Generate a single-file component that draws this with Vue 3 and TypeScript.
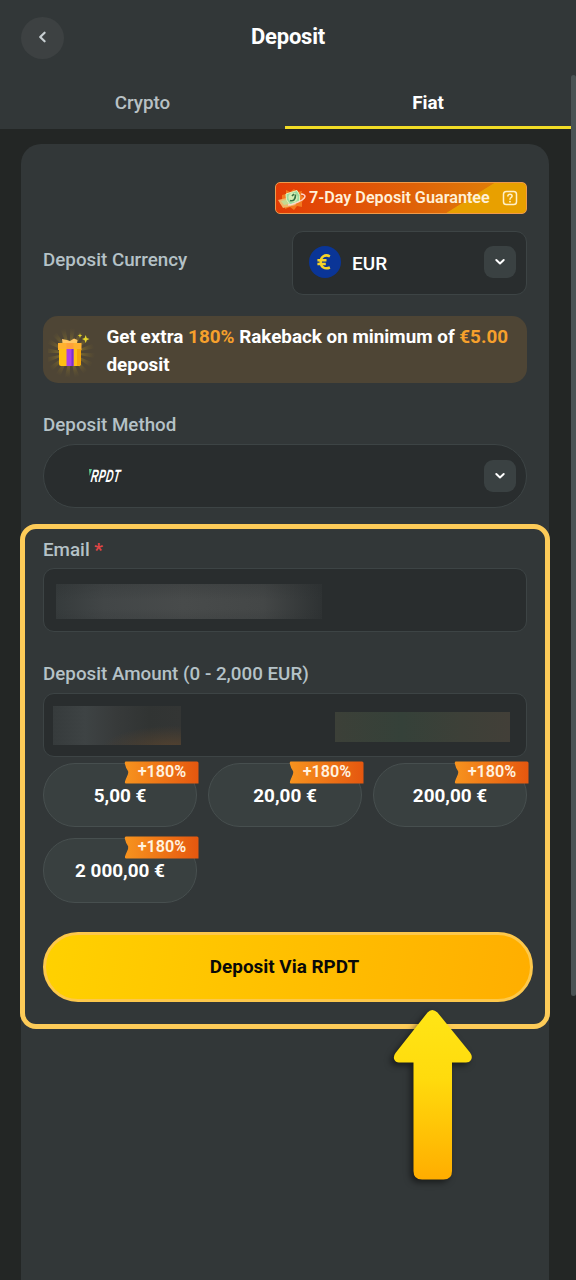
<script setup lang="ts">
import { ref } from 'vue'

interface Preset {
  label: string
  bonus: string
}

const tabs = ['Crypto', 'Fiat']
const activeTab = ref('Fiat')
const presets: Preset[] = [
  { label: '5,00 €', bonus: '+180%' },
  { label: '20,00 €', bonus: '+180%' },
  { label: '200,00 €', bonus: '+180%' },
  { label: '2 000,00 €', bonus: '+180%' },
]
const rays = Array.from({ length: 16 }, (_, i) => i * 22.5 + 6)
</script>

<template>
  <div class="page">
    <header class="header">
      <div class="titlebar">
        <button class="back" aria-label="Back">
          <svg width="43" height="42" viewBox="0 0 43 42">
            <path d="M23.600 15.700 L19.200 20 L23.600 24.300" fill="none" stroke="#c8cfd2" stroke-width="2.2" stroke-linecap="round" stroke-linejoin="round" />
          </svg>
        </button>
        <h1 class="title">Deposit</h1>
      </div>
      <nav class="tabs">
        <button v-for="t in tabs" :key="t" class="tab" :class="{ active: t === activeTab }" @click="activeTab = t">{{ t }}</button>
      </nav>
    </header>

    <main class="card">
      <div class="guarantee">
        <svg class="coin" width="30" height="28" viewBox="0 0 30 28">
          <path d="M5 10 L9 9 L9 5 L13 7 L17 4 L20 7 L25 6 L24 10 L28 13 L25 17 L25 22 L20 21 L17 25 L13 22 L8 24 L8 20 L3 19 L5 15Z" fill="#f37a20" />
          <path d="M1 15 L14 12 L19 20 L6 23Z" fill="#efb66b" />
          <path d="M4 16 L13 14 L16 18 L7 20Z" fill="#c5d991" />
          <path d="M9 9 L20 5.500 Q24 10 22.500 16 L13 20 Q8 15 9 9Z" fill="#98dda0" stroke="#e8f0b8" stroke-width="1" stroke-linejoin="round" />
          <ellipse cx="16" cy="12.5" rx="4.6" ry="4.8" fill="#d6edb3" />
          <path d="M13 15.500 Q18.500 17 18.500 9.500 M15 11 L17 9" fill="none" stroke="#367343" stroke-width="1.7" />
          <path d="M24 9 Q31.500 10 25 15 Q19 19 11 20" fill="none" stroke="#ffd5cc" stroke-width="1.4" />
        </svg>
        <span>7-Day Deposit Guarantee</span>
        <svg class="help" width="16" height="16" viewBox="0 0 16 16" fill="none" stroke="#fff0c9" stroke-width="1.5" stroke-linecap="round">
          <rect x="1.500" y="1.500" width="13" height="13" rx="2.8" />
          <path d="M5.900 6.100 Q5.900 4.200 8 4.200 Q10.100 4.200 10.100 6 Q10.100 7 9 7.700 Q8 8.200 8 9.200" />
          <path d="M8 11.600 V11.700" stroke-width="1.8" />
        </svg>
      </div>

      <div class="currency-row">
        <span class="label">Deposit Currency</span>
        <div class="select currency">
          <svg width="32" height="32" viewBox="0 0 32 32">
            <circle cx="16" cy="16" r="16" fill="#0a3597" />
            <path d="M20.900 10.300 C15.800 7.800 11.700 10.800 11.700 16 C11.700 21.100 15.800 23.700 20.900 21.500 M8.400 14.200 H17.500 M8.400 17.900 H16.800" fill="none" stroke="#f5d327" stroke-width="2.5" />
          </svg>
          <span class="code">EUR</span>
          <span class="drop">
            <svg width="12" height="8" viewBox="0 0 12 8"><path d="M2.300 2 L6 5.400 L9.700 2" fill="none" stroke="#fff" stroke-width="2" stroke-linecap="round" stroke-linejoin="round" /></svg>
          </span>
        </div>
      </div>

      <div class="promo">
        <svg class="gift" width="48" height="56" viewBox="0 0 48 56">
          <defs>
            <radialGradient id="ray" gradientUnits="userSpaceOnUse" cx="22" cy="29" r="25">
              <stop offset="0.3" stop-color="#85722f" />
              <stop offset="1" stop-color="#6d5d30" stop-opacity="0" />
            </radialGradient>
          </defs>
          <path v-for="r in rays" :key="r" d="M22 29 L19.500 4 L24.500 4Z" :transform="`rotate(${r} 22 29)`" fill="url(#ray)" />
          <path d="M14.500 19.500 L14 15 L19 16 L22 17 L26 14.500 L29.500 16 L29 19.500Z" fill="#ffc663" />
          <path d="M10 19 H33.500 V26 H10Z" fill="#ffb22f" />
          <path d="M11 25 H33 V40 Q33 42 31 42 H13 Q11 42 11 40Z" fill="#ffc012" />
          <path d="M29 25 H33 V40 Q32 42 29 42Z" fill="#f5a70a" />
          <path d="M18.500 19 H25.500 V25 H18.500Z" fill="#ffa03a" />
          <path d="M18.500 25 H25.500 V42 H18.500Z" fill="#a842e8" />
          <path d="M23.500 25 H25.500 V42 H23.500Z" fill="#7832cc" />
          <path d="M37.700 11 L38.700 14 L41.500 15.100 L38.700 16.200 L37.700 19 L36.600 16.200 L34 15.100 L36.600 14Z M32 9.300 L32.600 11 L34.300 11.600 L32.600 12.200 L32 14 L31.400 12.200 L29.700 11.600 L31.400 11Z" fill="#e5d52a" />
        </svg>
        <p>Get extra <em>180%</em> Rakeback on minimum of <em>€5.00</em> deposit</p>
      </div>

      <span class="label method-label">Deposit Method</span>
      <div class="select method">
        <svg width="36" height="18" viewBox="0 0 36 18">
          <path d="M1 2 H4 L1.500 9Z" fill="#5dc88c" />
          <text class="brand" transform="translate(2.2 15.3) skewX(-8) scale(.57 1)" textLength="51" lengthAdjust="spacing">RPDT</text>
        </svg>
        <span class="drop">
          <svg width="12" height="8" viewBox="0 0 12 8"><path d="M2.300 2 L6 5.400 L9.700 2" fill="none" stroke="#fff" stroke-width="2" stroke-linecap="round" stroke-linejoin="round" /></svg>
        </span>
      </div>

      <section class="highlight">
        <span class="label email-label">Email <b>*</b></span>
        <div class="field"><i class="mask mask-email"></i></div>
        <span class="label amount-label">Deposit Amount (0 - 2,000 EUR)</span>
        <div class="field amount">
          <i class="mask mask-amount"></i>
          <i class="mask mask-bonus"></i>
        </div>
        <div class="presets">
          <button v-for="p in presets" :key="p.label" class="preset">
            {{ p.label }}
            <span class="bonus">
              <svg width="75" height="23" viewBox="0 0 75 23">
                <defs>
                  <linearGradient id="ribbon"><stop offset="0" stop-color="#f7931e" /><stop offset="1" stop-color="#e5570f" /></linearGradient>
                </defs>
                <path d="M2 .5 H73 Q74.500 .5 74.500 2 V22.500 H2 Q.5 22.500 1 20.500 Q1.500 18.500 3 15.500 Q4.500 13 4.200 10.500 Q3.800 9.500 2.200 7 L.8 2.500 Q.5 .5 2 .5Z" fill="url(#ribbon)" />
              </svg>
              <span>{{ p.bonus }}</span>
            </span>
          </button>
        </div>
        <button class="submit">Deposit Via RPDT</button>
        <svg class="arrow" width="92" height="186" viewBox="0 0 92 186">
          <defs>
            <linearGradient id="arrowFill" x1="0" y1="0" x2="0" y2="1">
              <stop offset="0" stop-color="#ffe516" /><stop offset="0.4" stop-color="#ffdb0d" /><stop offset="1" stop-color="#ffad00" />
            </linearGradient>
          </defs>
          <path d="M40.500 6.500 Q45 1.500 50.500 6.500 L83 46.500 Q86 50.500 84 54 Q82.500 56.500 79 56.500 H65 V165 Q65 173.500 56.500 173.500 H35 Q26.500 173.500 26.500 165 V56.500 H12 Q8.500 56.500 7.300 53.500 Q6 50.500 8.500 47Z" fill="url(#arrowFill)" />
        </svg>
      </section>
    </main>
    <div class="scrollbar"></div>
  </div>
</template>

<style>
body { background: #232625; }
</style>

<style scoped>
* { box-sizing: border-box; }
.page {
  position: relative;
  display: flex;
  flex-direction: column;
  width: 576px;
  height: 1280px;
  overflow: hidden;
  background: #232625;
  color: #fff;
  font-family: Roboto, "Liberation Sans", sans-serif;
}
button { border: 0; padding: 0; font-family: inherit; color: inherit; }
.header { flex: none; height: 129px; background: #323738; }
.titlebar { display: flex; align-items: center; height: 76px; padding-left: 21px; }
.back { display: block; width: 43px; height: 42px; border-radius: 50%; background: #3d4142; }
.back svg { display: block; }
.title { flex: 1; margin: 0 64px 2px 0; text-align: center; font-size: 22px; line-height: 26px; font-weight: 700; letter-spacing: -0.2px; }
.tabs { display: grid; grid-template-columns: 285px 286px; width: 571px; height: 53px; }
.tab { height: 53px; padding-top: 3px; background: none; border-bottom: 3px solid transparent; font-size: 18.8px; font-weight: 500; color: #b9c1c4; }
.tab.active { border-bottom-color: #f2dc26; font-weight: 700; color: #fff; }
.card {
  display: flex;
  flex: none;
  flex-direction: column;
  width: 528px;
  height: 1180px;
  margin: 15px 0 0 21px;
  padding: 38px 22px 0;
  border-radius: 20px;
  background: #323738;
}
.guarantee {
  display: flex;
  flex: none;
  align-items: center;
  align-self: flex-end;
  width: 252px;
  height: 32px;
  padding: 0 8px 0 2px;
  border: 1px solid #ee9a4b;
  border-radius: 5px;
  background: linear-gradient(148deg, transparent 0 73%, #e8a000 73.5% 100%), linear-gradient(90deg, #e33c05, #df6208 55%, #df8707);
  color: #fff0d8;
  font-size: 16.2px;
  font-weight: 600;
  white-space: nowrap;
}
.guarantee .help { margin: 0 0 0 auto; }
.coin { margin: 2px 3px 0 -1px; }
.guarantee span { margin: -1px 0 0 -1px; }
.currency-row { display: flex; flex: none; justify-content: space-between; margin-top: 17px; }
.label { flex: none; color: #b5c2c7; font-size: 18.8px; line-height: 22px; font-weight: 500; white-space: nowrap; }
.currency-row .label { margin-top: 18px; }
.select { display: flex; flex: none; align-items: center; height: 64px; border: 1px solid #3d4445; border-radius: 11px; background: #292d2e; }
.currency { width: 235px; padding: 0 10px 2px 15.500px; }
.code { margin: 2px 0 0 11.500px; font-size: 19px; font-weight: 500; }
.drop { display: flex; align-items: center; justify-content: center; width: 32px; height: 32px; margin-left: auto; border-radius: 9px; background: #3a4142; }
.promo { display: flex; flex: none; align-items: center; height: 67px; margin-top: 21px; padding-left: 5px; border-radius: 15px; background: #4e4535; }
.gift { margin-top: 4px; }
.promo p { width: 418px; margin: 2px 0 0 10.500px; font-size: 18.85px; line-height: 28px; font-weight: 700; }
.promo em { color: #f6a02c; font-style: normal; }
.method-label { margin-top: 31px; }
.method { margin-top: 8px; padding: 0 10px 0 44px; border-radius: 32px; }
.brand { font: italic 700 18px "Liberation Sans", sans-serif; fill: #fff; }
.highlight {
  position: relative;
  display: flex;
  flex: none;
  flex-direction: column;
  height: 505px;
  margin: 16px -23px 0;
  padding: 10px 18px 0;
  border: 5px solid #fdcb58;
  border-radius: 16px;
}
.email-label { margin-bottom: -1px; }
.email-label b { color: #e04545; font-weight: 700; }
.field { display: flex; flex: none; align-items: center; width: 484px; height: 64px; margin-top: 8px; border: 1px solid #3d4445; border-radius: 11px; background: #292d2e; }
.mask { display: block; flex: none; }
.mask-email { width: 266px; height: 35px; margin: 3px 0 0 12px; background: linear-gradient(rgba(41, 45, 46, .25), transparent 45% 70%, rgba(41, 45, 46, .15)), linear-gradient(90deg, #363b3c 0, #424647 18%, #484b4b 48%, #444747 78%, #2e3233 100%); }
.amount-label { margin-top: 31px; }
.mask-amount { width: 128px; height: 39px; margin: 1px 0 0 9px; background: radial-gradient(ellipse 72px 24px at 94% 112%, #56432f, transparent), linear-gradient(90deg, #363b3c, #3e4344 25%, #373a3a 50%, #313433 75%, #333534); }
.mask-bonus { width: 175px; height: 30px; margin: 4px 0 0 154px; background: linear-gradient(90deg, #3c4038, #354139 38%, #3d4038 72%, #423f38); }
.presets { display: grid; grid-template-columns: repeat(3, 154px); gap: 11px; margin-top: 5.500px; }
.preset { position: relative; height: 64.500px; padding-top: 1px; border: 1px solid #474f4f; border-radius: 32px; background: #394040; font-size: 18.9px; font-weight: 700; }
.bonus { position: absolute; top: -3px; right: -3px; width: 75px; height: 23px; }
.bonus svg { display: block; }
.bonus span { position: absolute; inset: 0 0 0 1px; line-height: 22px; font-size: 16.2px; font-weight: 600; text-align: center; color: #fff3e0; }
.submit { flex: none; width: 490px; height: 70px; margin-top: 29.500px; padding: 0 7px 2px 0; border: 3px solid #fdc84b; border-radius: 35px; background: linear-gradient(100deg, #ffd100, #ffae00); color: #090909; font-size: 18.9px; font-weight: 700; }
.arrow { position: absolute; left: 361.500px; top: 477px; filter: drop-shadow(-3px 3px 3px rgba(0, 0, 0, .5)); }
.scrollbar { position: absolute; top: 75px; right: 0; width: 5px; height: 921px; border-radius: 3px; background: #4a5354; }
</style>
